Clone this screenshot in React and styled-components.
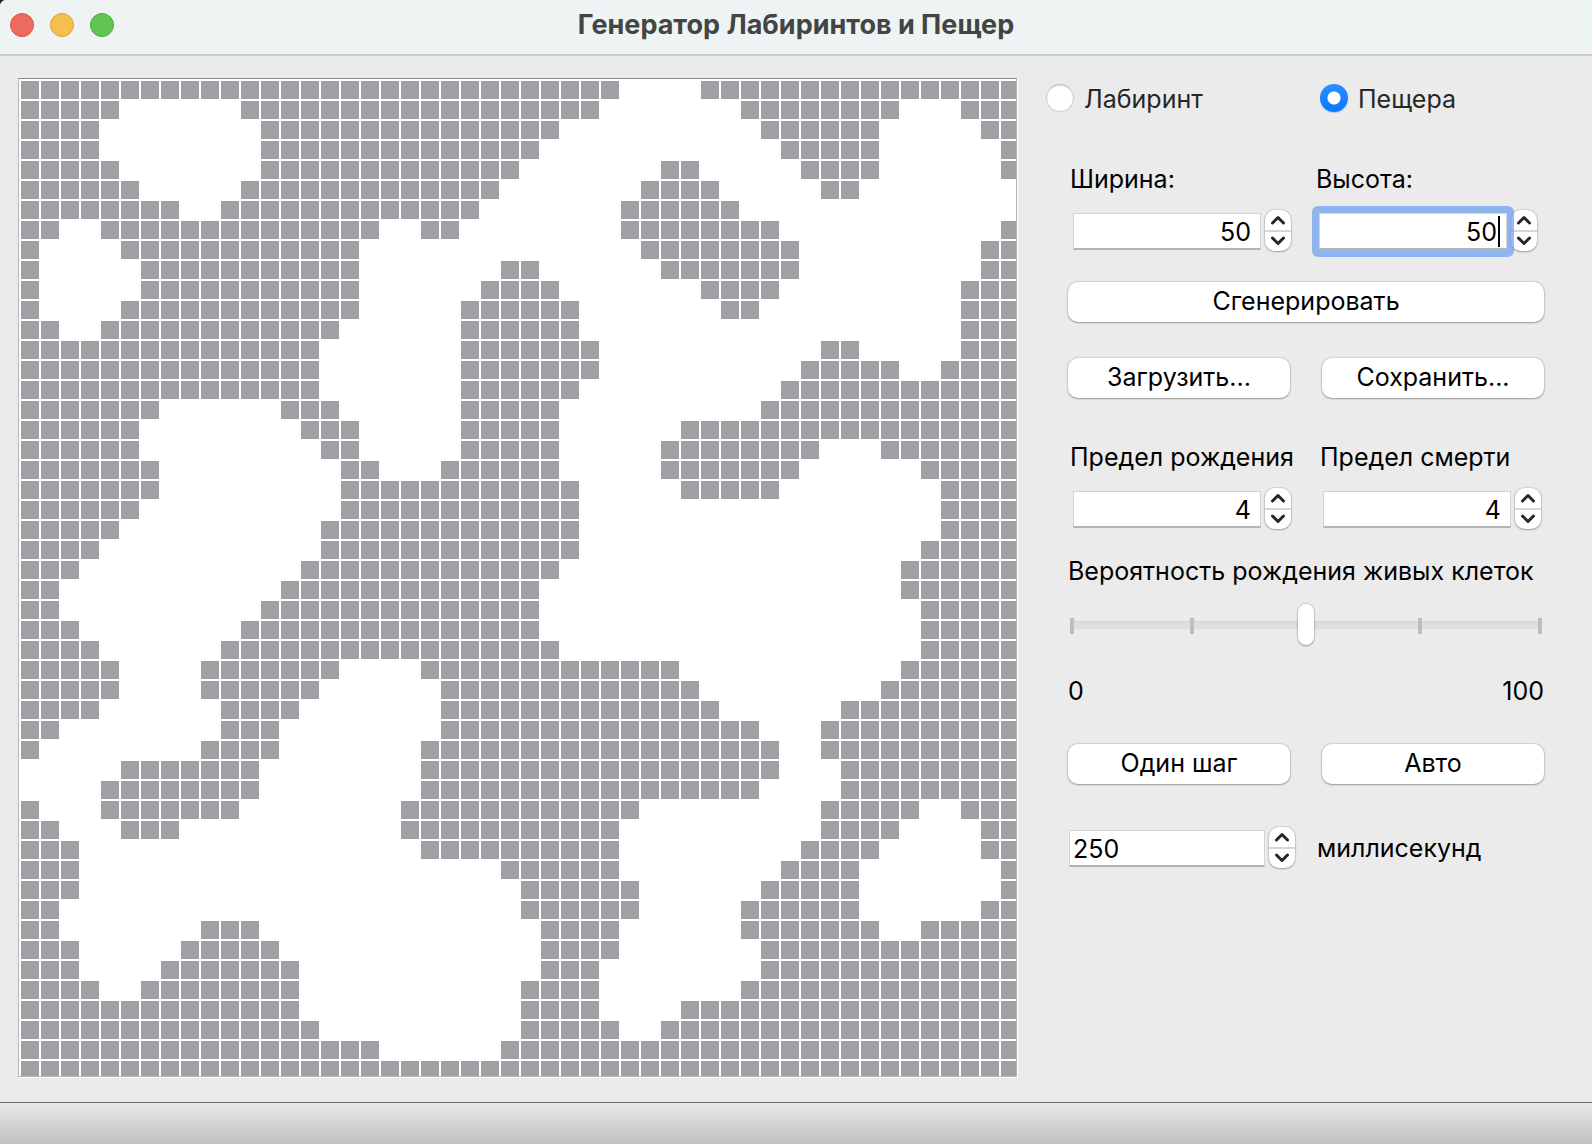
import React, { useState } from "react";
import styled, { createGlobalStyle, css } from "styled-components";

const GlobalStyle = createGlobalStyle`
  *, *::before, *::after { box-sizing: border-box; }
  body { margin: 0; background: #1c1c1c; }
  body, button, input { font-family: Inter, "Liberation Sans", sans-serif; font-size: 25px; color: #000; }
`;

/* Wall cells of the cave: for each row, the inclusive column runs. */
const CAVE = `0-29,34-49
0-4,11-28,36-43,47-49
0-3,12-26,37-42,48-49
0-3,12-25,38-42,49-49
0-4,12-24,32-33,39-42,49-49
0-5,11-23,31-34,40-41
0-7,10-22,30-35
0-1,4-17,20-21,30-37,49-49
0-0,5-16,31-38,48-49
0-0,6-16,24-25,32-38,48-49
0-0,6-16,23-26,34-37,47-49
0-0,5-16,22-27,35-36,47-49
0-1,4-15,22-27,47-49
0-14,22-28,40-41,47-49
0-14,22-28,39-43,46-49
0-14,22-27,38-49
0-6,13-15,22-26,37-49
0-5,14-16,22-26,33-49
0-5,15-16,22-26,32-39,43-49
0-6,16-17,21-26,32-38,45-49
0-6,16-27,33-37,46-49
0-5,16-27,46-49
0-4,15-27,46-49
0-3,15-27,45-49
0-2,14-26,44-49
0-1,13-25,44-49
0-1,12-25,45-49
0-2,11-25,45-49
0-3,10-26,45-49
0-4,9-15,20-32,44-49
0-4,9-14,21-33,43-49
0-3,10-13,21-34,41-49
0-1,10-12,21-36,40-49
0-0,9-12,20-37,40-49
5-11,20-37,41-49
4-11,20-36,41-49
0-0,4-10,19-30,40-44,47-49
0-1,5-7,19-29,40-43,48-49
0-2,20-29,39-42,48-49
0-2,24-29,38-41,49-49
0-2,25-30,37-41,49-49
0-1,25-30,36-41,48-49
0-1,9-11,26-29,36-42,45-49
0-2,8-12,26-29,37-49
0-2,7-13,26-28,37-49
0-3,6-13,25-28,36-49
0-13,25-28,33-49
0-14,25-29,32-49
0-17,24-49
0-49`;

const WALLS = CAVE.split("\n").flatMap((line, row) =>
  line.split(",").flatMap((run) => {
    const [from, to] = run.split("-").map(Number);
    return Array.from({ length: to - from + 1 }, (_, i) => [from + i, row]);
  })
);

const WALL_PATH = WALLS.map(([c, r]) => `M${2 + c * 20} ${2 + r * 20}h18v18h-18z`).join("");

const Window = styled.div`
  min-height: 100vh;
  display: flex;
  flex-direction: column;
  background: #ebebeb;
  border-top-left-radius: 6px;
  overflow: hidden;
`;

const TitleBar = styled.header`
  display: grid;
  grid-template-columns: 1fr auto 1fr;
  align-items: center;
  height: 56px;
  padding: 0 10px 4px;
  background: #eef4f4;
  border-bottom: 2px solid #cacccc;
`;

const Lights = styled.div`
  display: flex;
  gap: 16px;
`;

const Light = styled.button`
  width: 24px;
  height: 24px;
  padding: 0;
  border: 1px solid ${(p) => p.$edge};
  border-radius: 50%;
  background: ${(p) => p.$fill};
`;

const Title = styled.h1`
  margin: 0;
  font-size: 27px;
  line-height: 32px;
  font-weight: 700;
  color: #434545;
`;

const Body = styled.main`
  flex: 1;
  display: flex;
  align-items: flex-start;
  gap: 29px;
  padding: 22px 0 25px 18px;
`;

const Board = styled.div`
  flex: 1;
  min-width: 0;
  background: #fff;
  border: 1px solid #b6b6b6;
  border-top-color: #8a8a8a;
  box-shadow: 1px 1px 0 #fff;

  svg { display: block; width: 100%; height: auto; }
`;

const Panel = styled.form`
  flex: none;
  width: 546px;
  padding: 6px 48px 0 0;
`;

const RadioRow = styled.div`
  display: grid;
  grid-template-columns: 274px 1fr;
`;

const RadioLabel = styled.label`
  display: flex;
  align-items: center;
  height: 28px;
  gap: 10px;
  line-height: 28px;
  color: #262626;
`;

const RadioText = styled.span`
  padding-top: 2px;
`;

const Radio = styled.input`
  appearance: none;
  flex: none;
  width: 28px;
  height: 28px;
  margin: 0;
  border: 1px solid #d0d0d0;
  border-top-color: #bdbdbd;
  border-radius: 50%;
  background: #fff;
  box-shadow: inset 0 1px 2px rgba(0, 0, 0, 0.12);

  &:checked {
    border: 0;
    background: radial-gradient(circle, #fff 6px, transparent 7px), linear-gradient(#2b90ff, #0a78ff);
    box-shadow: 0 1px 1px rgba(0, 80, 200, 0.25);
  }
`;

const Controls = styled.div`
  padding: 51px 0 0 22px;
`;

const FieldRow = styled.div`
  display: grid;
  grid-template-columns: ${(p) => p.$first}px 1fr;
  margin-top: ${(p) => p.$gap || 0}px;
`;

const Caption = styled.label`
  display: block;
  padding-left: ${(p) => p.$indent || 0}px;
  line-height: 32px;
  white-space: nowrap;
`;

const SpinRow = styled.div`
  display: flex;
  align-items: center;
  gap: 4px;
  margin: ${(p) => (p.$plain ? "0 0 0 1px" : "15px 0 0 5px")};
`;

const Entry = styled.div`
  position: relative;
  width: ${(p) => (p.$wide ? 196 : 188)}px;
  height: 37px;
  margin-top: 2px;

  ${(p) =>
    p.$active &&
    css`
      &::before {
        content: "";
        position: absolute;
        z-index: 1;
        inset: -7px;
        border: 7px solid rgba(83, 145, 240, 0.6);
        border-radius: 6px;
        pointer-events: none;
      }
      &::after {
        content: "";
        position: absolute;
        top: 3px;
        right: 7px;
        width: 2px;
        height: 31px;
        background: #000;
      }
    `}
`;

const EntryInput = styled.input`
  display: block;
  width: 100%;
  height: 100%;
  padding: 2px ${(p) => (p.$left ? 3 : 9)}px 0;
  border: 1px solid #d4d4d4;
  border-bottom: 2px solid #b4b4b4;
  border-radius: 0;
  outline: none;
  background: #fff;
  text-align: ${(p) => (p.$left ? "left" : "right")};
  caret-color: transparent;
`;

const Stepper = styled.div`
  display: flex;
  flex-direction: column;
  width: 26px;
  height: 41px;
  border-radius: 10px;
  background: #fff;
  box-shadow: 0 0 1px 1px rgba(0, 0, 0, 0.1), 0 1px 2px rgba(0, 0, 0, 0.25);
  overflow: hidden;
`;

const Step = styled.button`
  flex: 1;
  display: grid;
  place-items: center;
  padding: 0;
  border: 0;
  background: transparent;

  & + & { border-top: 2px solid #d6d6d6; }
`;

const ButtonRow = styled.div`
  display: grid;
  grid-auto-flow: column;
  grid-auto-columns: 1fr;
  gap: 32px;
  margin-top: ${(p) => p.$gap}px;
`;

const PushButton = styled.button`
  height: 40px;
  padding: 0 0 2px;
  border: 0;
  border-radius: 10px;
  background: #fff;
  line-height: 32px;
  box-shadow: 0 0 1px 1px rgba(0, 0, 0, 0.1), 0 1px 2px rgba(0, 0, 0, 0.28);
`;

const ChanceCaption = styled(Caption)`
  margin-top: 26px;
`;

const tick = "linear-gradient(#bdbdbd, #bdbdbd)";

const Slider = styled.input`
  appearance: none;
  display: block;
  width: calc(100% - 4px);
  height: 41px;
  margin: 17px 2px 0;
  background:
    ${tick} 0 14px / 4px 16px no-repeat,
    ${tick} 25.6% 14px / 4px 16px no-repeat,
    ${tick} 74.4% 14px / 4px 16px no-repeat,
    ${tick} 100% 14px / 4px 16px no-repeat,
    linear-gradient(#d4d4d4, #dedede 30%, #dedede) 0 17px / 100% 8px no-repeat;

  &::-webkit-slider-thumb {
    appearance: none;
    width: 16px;
    height: 41px;
    border-radius: 8px;
    background: #fff;
    box-shadow: 0 0 1px 1px rgba(0, 0, 0, 0.1), 0 1px 2px rgba(0, 0, 0, 0.3);
  }
`;

const Scale = styled.div`
  display: flex;
  justify-content: space-between;
  margin-top: 30px;
  line-height: 32px;
`;

const DelayRow = styled.div`
  display: flex;
  align-items: center;
  gap: 22px;
  margin-top: 43px;
`;

const StatusBar = styled.footer`
  height: 42px;
  border-top: 1px solid #6e6e6e;
  background: linear-gradient(#e9e9e9, #c0c0c0);
`;

function Chevron({ down }) {
  return (
    <svg width="16" height="10" viewBox="0 0 16 10" fill="none" stroke="#262626" strokeWidth="3" strokeLinecap="round" strokeLinejoin="round" aria-hidden="true">
      <path d={down ? "M2.5 2 8 7.5 13.5 2" : "M2.5 8 8 2.5 13.5 8"} />
    </svg>
  );
}

function Spin({ id, initial, step = 1, wide, plain, active }) {
  const [value, setValue] = useState(initial);
  const change = (delta) => setValue((v) => Math.max(0, Number(v) + delta));
  return (
    <SpinRow $plain={plain}>
      <Entry $wide={wide} $active={active}>
        <EntryInput id={id} inputMode="numeric" value={value} $left={wide} onChange={(e) => setValue(e.target.value)} />
      </Entry>
      <Stepper>
        <Step type="button" aria-label="Больше" onClick={() => change(step)}>
          <Chevron />
        </Step>
        <Step type="button" aria-label="Меньше" onClick={() => change(-step)}>
          <Chevron down />
        </Step>
      </Stepper>
    </SpinRow>
  );
}

function Field({ id, label, ...spin }) {
  return (
    <div>
      <Caption htmlFor={id} $indent={2}>{label}</Caption>
      <Spin id={id} {...spin} />
    </div>
  );
}

export default function App() {
  const [mode, setMode] = useState("cave");
  const [chance, setChance] = useState(50);

  return (
    <Window>
      <GlobalStyle />
      <TitleBar>
        <Lights>
          <Light type="button" aria-label="Закрыть" $fill="#ed6a5f" $edge="#d9534a" />
          <Light type="button" aria-label="Свернуть" $fill="#f5bf4f" $edge="#d8a03c" />
          <Light type="button" aria-label="Развернуть" $fill="#61c554" $edge="#4ca73c" />
        </Lights>
        <Title>Генератор Лабиринтов и Пещер</Title>
      </TitleBar>

      <Body>
        <Board>
          <svg viewBox="0 0 997 997" shapeRendering="crispEdges" role="img" aria-label="Пещера">
            <path d={WALL_PATH} fill="#a09fa4" />
          </svg>
        </Board>

        <Panel onSubmit={(e) => e.preventDefault()}>
          <RadioRow>
            <RadioLabel>
              <Radio type="radio" name="mode" checked={mode === "maze"} onChange={() => setMode("maze")} />
              <RadioText>Лабиринт</RadioText>
            </RadioLabel>
            <RadioLabel>
              <Radio type="radio" name="mode" checked={mode === "cave"} onChange={() => setMode("cave")} />
              <RadioText>Пещера</RadioText>
            </RadioLabel>
          </RadioRow>

          <Controls>
            <FieldRow $first={246}>
              <Field id="width" label="Ширина:" initial={50} />
              <Field id="height" label="Высота:" initial={50} active />
            </FieldRow>

            <ButtonRow $gap={31}>
              <PushButton type="submit">Сгенерировать</PushButton>
            </ButtonRow>
            <ButtonRow $gap={36}>
              <PushButton type="button">Загрузить...</PushButton>
              <PushButton type="button">Сохранить...</PushButton>
            </ButtonRow>

            <FieldRow $first={250} $gap={43}>
              <Field id="birth" label="Предел рождения" initial={4} />
              <Field id="death" label="Предел смерти" initial={4} />
            </FieldRow>

            <ChanceCaption htmlFor="chance">Вероятность рождения живых клеток</ChanceCaption>
            <Slider id="chance" type="range" min="0" max="100" value={chance} onChange={(e) => setChance(e.target.value)} />
            <Scale>
              <span>0</span>
              <span>100</span>
            </Scale>

            <ButtonRow $gap={37}>
              <PushButton type="button">Один шаг</PushButton>
              <PushButton type="button">Авто</PushButton>
            </ButtonRow>

            <DelayRow>
              <Spin id="delay" initial={250} step={50} wide plain />
              <Caption htmlFor="delay">миллисекунд</Caption>
            </DelayRow>
          </Controls>
        </Panel>
      </Body>
      <StatusBar />
    </Window>
  );
}
